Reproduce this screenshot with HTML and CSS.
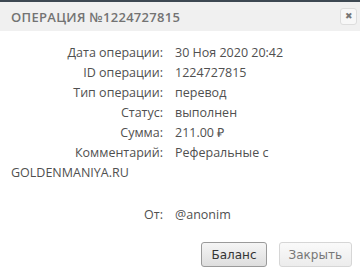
FILE: index.html
```html
<!DOCTYPE html>
<html lang="ru">
<head>
    <meta charset="UTF-8">
    <title>Операция</title>
    <link rel="stylesheet" href="styles.css">
</head>
<body>
    <div class="modal">
        <div class="modal-header">
            <span class="modal-title">Операция №1224727815</span>
            <button class="close-button">&#10006;</button>
        </div>
        <div class="modal-body">
            <div class="info-row"><span class="label">Дата операции:</span>30 Ноя 2020 20:42</div>
            <div class="info-row"><span class="label">ID операции:</span>1224727815</div>
            <div class="info-row"><span class="label">Тип операции:</span>перевод</div>
            <div class="info-row"><span class="label">Статус:</span>выполнен</div>
            <div class="info-row"><span class="label">Сумма:</span>211.00 &#8381;</div>
            <div class="info-row"><span class="label">Комментарий:</span><span>Реферальные с</span><br><span>GOLDENMANIYA.RU</span></div>
            <div class="info-row from-row"><span class="label">От:</span>@anonim</div>
        </div>
        <div class="modal-footer">
            <button class="btn btn-primary">Баланс</button>
            <button class="btn btn-disabled">Закрыть</button>
        </div>
    </div>
</body>
</html>
```

FILE: styles.css
```css
body {
    margin: 0;
    background-color: #ffffff;
    font-family: "Open Sans", Arial, sans-serif;
    color: #505050;
}
.modal {
    width: 360px;
    border-top: 2px solid #3d4852;
}
.modal-header {
    display: flex;
    align-items: center;
    justify-content: space-between;
    height: 29px;
    padding: 0 3px 0 11px;
    background-color: #f0f0f0;
}
.modal-title {
    font-size: 13px;
    font-weight: 600;
    text-transform: uppercase;
    letter-spacing: 0.3px;
    color: #737373;
}
.close-button {
    width: 17px;
    height: 17px;
    padding: 0;
    font-size: 9px;
    line-height: 15px;
    color: #777777;
    background-color: #f7f7f7;
    border: 1px solid #dddddd;
    border-radius: 3px;
}
.modal-body {
    padding: 12px 11px 0 11px;
    font-size: 12.5px;
    line-height: 20px;
}
.label {
    display: inline-block;
    width: 152px;
    margin-right: 12px;
    text-align: right;
}
.from-row {
    margin-top: 22px;
}
.modal-footer {
    display: flex;
    justify-content: flex-end;
    gap: 12px;
    padding: 17px 8px 0 0;
}
.btn {
    height: 25px;
    padding: 0 9px;
    font-family: "DejaVu Sans", Verdana, sans-serif;
    font-size: 12px;
    border-radius: 3px;
}
.btn-primary {
    color: #333333;
    background: linear-gradient(#f5f5f5, #dedede);
    border: 1px solid #9a9a9a;
}
.btn-disabled {
    color: #777777;
    background: linear-gradient(#fafafa, #ececec);
    border: 1px solid #d6d6d6;
}
```
